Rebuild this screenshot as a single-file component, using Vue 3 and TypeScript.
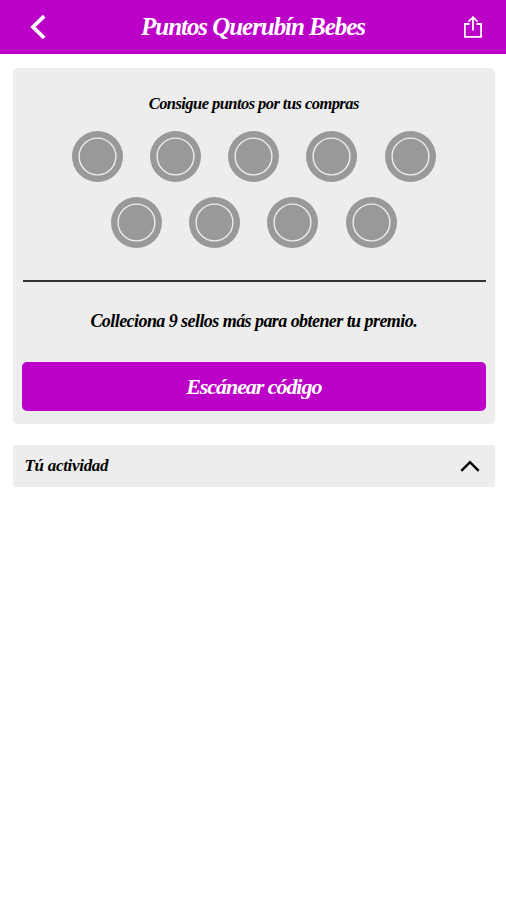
<script setup lang="ts">
import { ref } from 'vue'

const rows: number[] = [5, 4]
const open = ref<boolean>(true)
</script>

<template>
  <div class="screen">
    <header class="bar">
      <button class="icon-button" aria-label="Volver">
        <svg class="back" width="18" height="28" viewBox="0 0 18 28">
          <path d="M16.2 3.2 5 14 16.2 24.8" />
        </svg>
      </button>
      <h1 class="title">Puntos Querubín Bebes</h1>
      <button class="icon-button" aria-label="Compartir">
        <svg class="share" width="20" height="24" viewBox="0 0 20 24">
          <path d="M6.5 9H1.9V21.8H18.1V9H13.5M10 15.5V2.5M5.4 6.6 10 2.2 14.6 6.6" />
        </svg>
      </button>
    </header>

    <main class="content">
      <section class="card">
        <p class="lead">Consigue puntos por tus compras</p>
        <div class="stamps">
          <div v-for="(count, r) in rows" :key="r" class="stamp-row">
            <svg v-for="n in count" :key="n" class="stamp" viewBox="0 0 51 51">
              <circle class="disc" cx="25.5" cy="25.5" r="25.5" />
              <circle class="ring" cx="25.5" cy="25.5" r="18.4" />
            </svg>
          </div>
        </div>
        <hr class="divider" />
        <p class="goal">Colleciona 9 sellos más para obtener tu premio.</p>
        <button class="scan">Escánear código</button>
      </section>

      <button class="activity" :aria-expanded="open" @click="open = !open">
        <span class="label">Tú actividad</span>
        <svg class="chevron" :class="{ flipped: !open }" width="20" height="12" viewBox="0 0 20 12">
          <path d="M1.3 10.8 10 2.2 18.7 10.8" />
        </svg>
      </button>
    </main>
  </div>
</template>

<style>
body {
  background: #fff;
}
</style>

<style scoped>
.screen {
  min-height: 900px;
  font-family: "Liberation Serif", serif;
  font-style: italic;
  font-weight: 700;
  color: #000;
}
button {
  border: 0;
  padding: 0;
  background: none;
  font: inherit;
  color: inherit;
  white-space: nowrap;
}
svg {
  display: block;
}
path {
  fill: none;
  stroke: currentColor;
}
.bar {
  box-sizing: border-box;
  height: 54px;
  padding: 0 23px 0 28px;
  display: flex;
  align-items: center;
  justify-content: space-between;
  background: #bb00c7;
  color: #fff;
}
.back path {
  stroke-width: 3.8;
}
.share path {
  stroke-width: 1.8;
}
.title {
  margin: 0;
  padding-right: 3px;
  font-size: 25px;
  line-height: 54px;
  letter-spacing: -1.05px;
  white-space: nowrap;
}
.content {
  padding: 14px 11px 0 12.5px;
}
.card {
  box-sizing: border-box;
  height: 356px;
  padding: 24px 9px 0;
  border-radius: 5px;
  background: #ededed;
}
.lead,
.goal {
  margin: 0;
  text-align: center;
  white-space: nowrap;
}
.lead {
  font-size: 16.5px;
  line-height: 24px;
  letter-spacing: -0.56px;
}
.stamps {
  margin-top: 15px;
  display: flex;
  flex-direction: column;
  gap: 15px;
}
.stamp-row {
  display: flex;
  justify-content: center;
  gap: 27.2px;
}
.stamp {
  width: 51px;
  height: 51px;
}
.disc {
  fill: #999;
}
.ring {
  fill: none;
  stroke: #ededed;
  stroke-width: 1.4;
}
.divider {
  margin: 32px 0 0 1px;
  border: 0;
  height: 2px;
  background: #333;
}
.goal {
  margin-top: 27px;
  font-size: 18px;
  line-height: 24px;
  letter-spacing: -0.56px;
}
.scan {
  display: block;
  width: 100%;
  height: 49px;
  margin: 29px 0 0;
  border-radius: 5px;
  background: #bb00c7;
  color: #fff;
  font-size: 22px;
  line-height: 49px;
  letter-spacing: -1.05px;
}
.activity {
  box-sizing: border-box;
  width: 100%;
  height: 42px;
  margin-top: 21px;
  padding: 0 15px 0 12px;
  display: flex;
  align-items: center;
  justify-content: space-between;
  border-radius: 3px;
  background: #ededed;
  font-size: 17px;
  letter-spacing: -0.3px;
}
.chevron path {
  stroke-width: 2.5;
}
.flipped {
  transform: rotate(180deg);
}
</style>
